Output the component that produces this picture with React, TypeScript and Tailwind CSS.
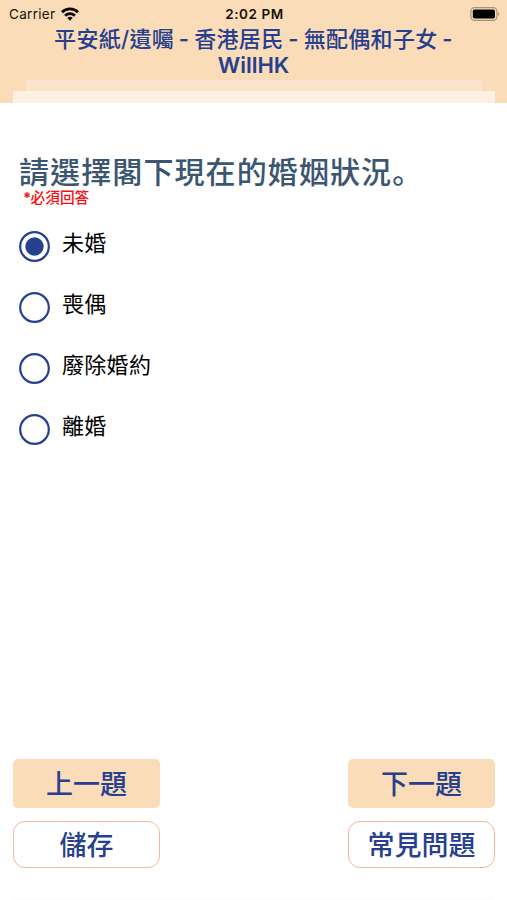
import { useState } from "react";

const options = ["未婚", "喪偶", "廢除婚約", "離婚"];

function StatusBar() {
  return (
    <div className="grid h-[27px] grid-cols-3 items-center pr-[7px] pl-[9px] text-[13.5px] leading-[27px] text-[#17120d]">
      <div className="flex items-center gap-[6px]">
        <span className="tracking-[0.3px]">Carrier</span>
        <svg className="-mt-px" width="18" height="14" viewBox="0 0 18 14" fill="none" stroke="#0c0a08" strokeWidth="2.8">
          <path d="M1 5.2a11.5 11.5 0 0 1 16 0" />
          <path d="M4.1 8.7a7 7 0 0 1 9.8 0" />
          <path d="M9 13.8 6.3 11.1a3.9 3.9 0 0 1 5.4 0Z" fill="#0c0a08" stroke="none" />
        </svg>
      </div>
      <span className="pt-px text-center font-semibold tracking-[0.55px]">2:02 PM</span>
      <svg className="-mt-px justify-self-end" width="30" height="14" viewBox="0 0 30 14">
        <rect x="0.9" y="0.6" width="26" height="12.8" rx="3.6" fill="none" stroke="#a89379" strokeWidth="1.2" />
        <rect x="2.8" y="2.4" width="22.2" height="9.2" rx="1.8" fill="#000" />
        <path d="M28.1 5v4c1.6-.6 1.6-3.4 0-4Z" fill="#a89379" />
      </svg>
    </div>
  );
}

function Header() {
  return (
    <header className="flex h-[103px] flex-col bg-[#fadcb9]">
      <StatusBar />
      <h1 className="-mt-px h-[54px] text-center text-[22px] leading-[26px] font-semibold tracking-[0.3px] [word-spacing:-1px] text-[#263f8f]">
        <span className="font-medium">平安紙/遺囑</span> - <span className="font-medium">香港居民</span> -{" "}
        <span className="font-medium">無配偶和子女</span> -
        <br />
        <span className="tracking-normal">WillHK</span>
      </h1>
      <div className="mr-[25px] ml-[26px] h-[11px] bg-[#fbe4cc]" />
      <div className="mr-[12px] ml-[13px] h-[12px] bg-[#fef1e4]" />
    </header>
  );
}

type OptionProps = {
  label: string;
  checked: boolean;
  onSelect: () => void;
};

function Option({ label, checked, onSelect }: OptionProps) {
  return (
    <button
      type="button"
      role="radio"
      aria-checked={checked}
      onClick={onSelect}
      className="flex h-[61px] items-start gap-[12px] text-left"
    >
      <svg width="31" height="31" viewBox="0 0 31 31" fill="none">
        <circle cx="15.5" cy="15.5" r="14.3" stroke="#263f8f" strokeWidth="2.2" />
        {checked && <circle cx="15.5" cy="15.5" r="9.2" fill="#263f8f" />}
      </svg>
      <span className="-mt-[3px] text-[22px] leading-[30px] tracking-[0.3px] text-black">{label}</span>
    </button>
  );
}

export default function App() {
  const [selected, setSelected] = useState(0);

  return (
    <div className="flex h-[900px] w-[507px] flex-col overflow-hidden bg-white font-['Inter','Noto_Sans_CJK_TC',sans-serif]">
      <Header />
      <main className="flex-1 pt-[48px] pl-[19px]">
        <h2 className="h-[38px] font-['Noto_Sans_CJK_SC',sans-serif] text-[30px] leading-[38px] font-medium tracking-[1.1px] whitespace-nowrap text-[#3a5670]">
          <span className="font-['Noto_Sans_CJK_TC',sans-serif]">請選擇閣下現在的婚姻狀況</span>。
        </h2>
        <p className="h-[18px] pl-[4px] text-[14.7px] leading-[18px] font-medium text-[#fb0d0d]">
          <span className="-mr-[0.7px] font-bold">*</span>必須回答
        </p>
        <div role="radiogroup" className="mt-[24px] flex flex-col">
          {options.map((label, i) => (
            <Option key={label} label={label} checked={selected === i} onSelect={() => setSelected(i)} />
          ))}
        </div>
      </main>
      <footer className="grid grid-cols-[147px_147px] justify-between gap-y-[13px] pr-[12px] pb-[30px] pl-[13px] text-[27px] font-medium text-[#263f8f]">
        <button type="button" className="h-[49px] rounded-[5px] bg-[#fadcb9] pt-[3px]">
          上一題
        </button>
        <button type="button" className="h-[49px] rounded-[5px] bg-[#fadcb9] pt-[3px]">
          下一題
        </button>
        <button type="button" className="h-[47px] rounded-[12px] border-[1.5px] border-[#f7b497] pt-[4px]">
          儲存
        </button>
        <button type="button" className="h-[47px] rounded-[12px] border-[1.5px] border-[#f7b497] pt-[4px]">
          常見問題
        </button>
      </footer>
      <div className="mx-[13px] h-[2px] bg-[#fcfcfc]" />
    </div>
  );
}
